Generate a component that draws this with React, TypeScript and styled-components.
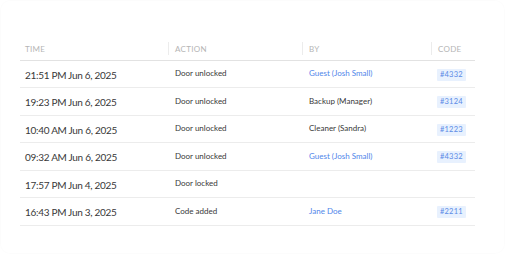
import React, {FC} from "react";
import styled, {createGlobalStyle} from "styled-components";

const GlobalStyle = createGlobalStyle`
    html, body {
        margin: 0;
        padding: 0;
        background: #ffffff;
    }
    body {
        font-family: "Lato", "Liberation Sans", sans-serif;
        -webkit-font-smoothing: antialiased;
    }
`

interface IEntry {
    time: string
    action: string
    by?: string
    guest?: boolean
    code?: string
}

const entries: IEntry[] = [
    {time: "21:51 PM Jun 6, 2025", action: "Door unlocked", by: "Guest (Josh Small)", guest: true, code: "#4332"},
    {time: "19:23 PM Jun 6, 2025", action: "Door unlocked", by: "Backup (Manager)", code: "#3124"},
    {time: "10:40 AM Jun 6, 2025", action: "Door unlocked", by: "Cleaner (Sandra)", code: "#1223"},
    {time: "09:32 AM Jun 6, 2025", action: "Door unlocked", by: "Guest (Josh Small)", guest: true, code: "#4332"},
    {time: "17:57 PM Jun 4, 2025", action: "Door locked"},
    {time: "16:43 PM Jun 3, 2025", action: "Code added", by: "Jane Doe", guest: true, code: "#2211"},
]

const Card = styled.div`
    width: 505px;
    height: 254px;
    box-sizing: border-box;
    border-radius: 10px;
    box-shadow: inset 0 0 0 1px rgba(0, 0, 0, 0.012);
    padding: 38px 30px 0 20px;
`

const Table = styled.table`
    width: 455px;
    border-collapse: collapse;
    table-layout: fixed;
`

const HeadCell = styled.th<{width: number; first?: boolean}>`
    width: ${(props) => props.width}px;
    height: 22px;
    box-sizing: border-box;
    padding: 0 0 0 ${(props) => (props.first ? 5 : 7)}px;
    text-align: left;
    font-weight: 400;
    font-size: 8px;
    letter-spacing: 0.3px;
    color: #b5b5b5;
    border-bottom: 1px solid #e2e2e2;
    position: relative;

    &::before {
        content: "";
        display: ${(props) => (props.first ? "none" : "block")};
        position: absolute;
        left: 0;
        top: 4px;
        bottom: 5px;
        border-left: 1px solid #ececec;
    }
`

const Row = styled.tr`
    height: 27.5px;
    border-bottom: 1px solid #ececec;
`

const TimeCell = styled.td`
    padding: 2px 0 0 5px;
    font-size: 10px;
    letter-spacing: -0.3px;
    color: #383838;
`

const Cell = styled.td<{blue?: boolean}>`
    padding: 0 0 1px 7px;
    font-size: 8px;
    color: ${(props) => (props.blue ? "#4f86ea" : "#383838")};
`

const CodeCell = styled.td`
    padding: 1px 0 0 6px;
    font-size: 8px;
    line-height: 12px;
`

const Badge = styled.span`
    display: inline-block;
    vertical-align: middle;
    padding: 2px 3px;
    border-radius: 1px;
    background: #e8f1fe;
    color: #5a8ae6;
    font-size: 7.5px;
    line-height: 8px;
    letter-spacing: 0.2px;
`

const App: FC = () => {
    return (
        <>
            <GlobalStyle/>
            <Card>
                <Table>
                    <thead>
                    <tr>
                        <HeadCell width={148} first>TIME</HeadCell>
                        <HeadCell width={134}>ACTION</HeadCell>
                        <HeadCell width={129}>BY</HeadCell>
                        <HeadCell width={44}>CODE</HeadCell>
                    </tr>
                    </thead>
                    <tbody>
                    {entries.map((e, i) => (
                        <Row key={i}>
                            <TimeCell>{e.time}</TimeCell>
                            <Cell>{e.action}</Cell>
                            <Cell blue={e.guest}>{e.by}</Cell>
                            <CodeCell>{e.code && <Badge>{e.code}</Badge>}</CodeCell>
                        </Row>
                    ))}
                    </tbody>
                </Table>
            </Card>
        </>
    )
}

export default App
